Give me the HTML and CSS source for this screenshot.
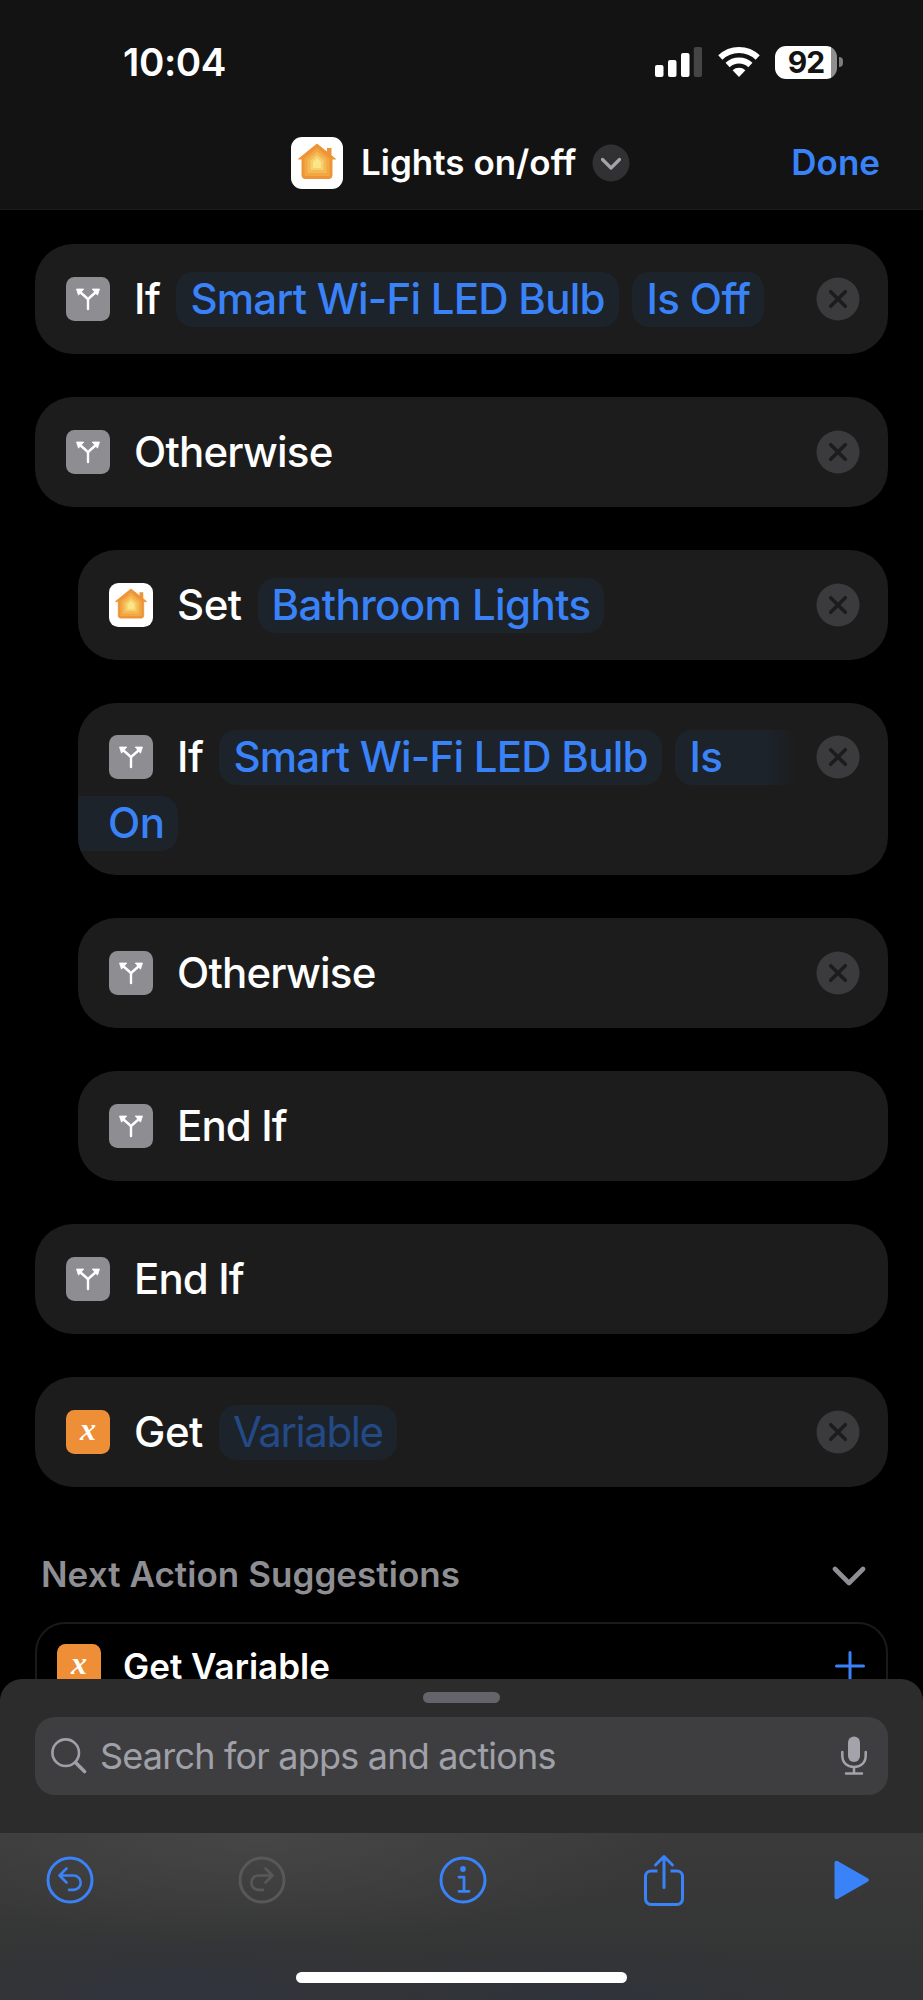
FILE: index.html
```
<!DOCTYPE html>
<html lang="en">

<head>
    <meta charset="UTF-8">
    <meta name="viewport" content="width=device-width, initial-scale=1.0">
    <title>Lights on/off</title>
    <link rel="stylesheet" href="styles.css">
</head>

<body>
    <!-- Shared icons -->
    <svg class="sprite" width="0" height="0">
        <symbol id="home" viewBox="0 0 52 52">
            <rect width="52" height="52" rx="11" fill="#fff" />
            <path d="M36 18v-7h4.500v11z" fill="#ee9438" />
            <path d="M26 7 44.500 22H41V38.500a3 3 0 0 1-3 3H14a3 3 0 0 1-3-3V22H7.500z" fill="#ee9438" stroke="#ee9438" stroke-width="1" stroke-linejoin="round" />
            <path d="M26 11 38.500 21.500V39h-25V21.500z" fill="#f2a742" />
            <path d="M26 14.500 35.500 22.500V36h-19V22.500z" fill="#f4b957" />
            <path d="M26 18 32.500 23.500V33h-13v-9.500z" fill="#f7cf6b" />
            <path d="M26 21 30 25v6h-8v-6z" fill="#fae588" />
        </symbol>
        <symbol id="branch" viewBox="0 0 44 44">
            <rect width="44" height="44" rx="8.500" fill="#8e8d92" />
            <path d="M22 32v-8.500c0-1-.4-1.700-1.200-2.500L14 15M22 23.500c0-1 .4-1.700 1.200-2.500L30 15" fill="none" stroke="#fff" stroke-width="2.400" stroke-linecap="round" />
            <path d="M10.500 12h7.300l-5.300 6.200zM33.500 12h-7.300l5.300 6.200z" fill="#fff" stroke="#fff" stroke-width=".8" stroke-linejoin="round" />
        </symbol>
        <symbol id="close" viewBox="0 0 44 44">
            <circle cx="22" cy="22" r="21.500" fill="#3b3b3d" />
            <path d="M14.700 14.700l14.600 14.600M29.300 14.700L14.700 29.300" stroke="#1c1c1c" stroke-width="3.600" stroke-linecap="round" />
        </symbol>
    </svg>

    <header class="header">
        <div class="status-bar">
            <span class="time">10:04</span>
            <div class="status-icons">
                <svg width="48" height="32" viewBox="0 0 48 32">
                    <g fill="#fff">
                        <rect x="0" y="19" width="8.500" height="12" rx="2" />
                        <rect x="13" y="14" width="8.500" height="17" rx="2" />
                        <rect x="26" y="7" width="8.500" height="24" rx="2" />
                    </g>
                    <rect x="38.800" y="1" width="8.200" height="30" rx="2" fill="#454545" />
                </svg>
                <svg class="wifi" width="42" height="32" viewBox="0 0 42 32">
                    <g fill="none" stroke="#fff" stroke-width="6">
                        <path d="M2.300 11.500a27 27 0 0 1 37.400 0" />
                        <path d="M9.600 19a16.500 16.500 0 0 1 22.800 0" />
                    </g>
                    <path d="M14.600 24.300a9.500 9.500 0 0 1 12.800 0L21 31z" fill="#fff" />
                </svg>
                <div class="battery"><span>92</span></div>
                <i class="battery-tip"></i>
            </div>
        </div>
        <div class="title-bar">
            <svg width="52" height="52"><use href="#home" /></svg>
            <h1>Lights on/off</h1>
            <svg class="title-more" width="38" height="38" viewBox="0 0 38 38">
                <circle cx="19" cy="19" r="18.500" fill="#313134" />
                <path d="M10.500 15.500 19 24l8.500-8.500" fill="none" stroke="#a3a3a9" stroke-width="3.200" stroke-linecap="round" stroke-linejoin="round" />
            </svg>
            <a class="done">Done</a>
        </div>
    </header>

    <main class="actions">
        <div class="card">
            <svg class="icon"><use href="#branch" /></svg>
            <span class="label">If</span>
            <span class="token bulb">Smart Wi-Fi LED Bulb</span>
            <span class="token state">Is Off</span>
            <svg class="close"><use href="#close" /></svg>
        </div>
        <div class="card">
            <svg class="icon"><use href="#branch" /></svg>
            <span class="label otherwise">Otherwise</span>
            <svg class="close"><use href="#close" /></svg>
        </div>

        <div class="nested">
            <div class="card">
                <svg class="icon"><use href="#home" /></svg>
                <span class="label">Set</span>
                <span class="token room">Bathroom Lights</span>
                <svg class="close"><use href="#close" /></svg>
            </div>
            <div class="card card-tall">
                <div class="line">
                    <svg class="icon"><use href="#branch" /></svg>
                    <span class="label">If</span>
                    <span class="token bulb">Smart Wi-Fi LED Bulb</span>
                    <span class="token token-start">Is</span>
                    <svg class="close"><use href="#close" /></svg>
                </div>
                <div class="line">
                    <span class="token token-end">On</span>
                </div>
            </div>
            <div class="card">
                <svg class="icon"><use href="#branch" /></svg>
                <span class="label otherwise">Otherwise</span>
                <svg class="close"><use href="#close" /></svg>
            </div>
            <div class="card">
                <svg class="icon"><use href="#branch" /></svg>
                <span class="label end-if">End If</span>
            </div>
        </div>

        <div class="card">
            <svg class="icon"><use href="#branch" /></svg>
            <span class="label end-if">End If</span>
        </div>
        <div class="card">
            <span class="icon var-icon">x</span>
            <span class="label">Get</span>
            <span class="token token-empty">Variable</span>
            <svg class="close"><use href="#close" /></svg>
        </div>

        <div class="suggestions-head">
            <h2>Next Action Suggestions</h2>
            <svg width="34" height="20" viewBox="0 0 34 20">
                <path d="M3 3l14 14L31 3" fill="none" stroke="#8e8e93" stroke-width="4.600" stroke-linecap="round" stroke-linejoin="round" />
            </svg>
        </div>
        <div class="suggestion">
            <span class="icon var-icon">x</span>
            <span class="suggestion-name">Get Variable</span>
            <svg width="30" height="30" viewBox="0 0 30 30">
                <path d="M15 1.500v27M1.500 15h27" stroke="#3a82f7" stroke-width="3" stroke-linecap="round" />
            </svg>
        </div>
    </main>

    <!-- Bottom sheet lies over the action list -->
    <footer class="sheet">
        <div class="grabber"></div>
        <div class="search">
            <svg width="36" height="36" viewBox="0 0 36 36" fill="none" stroke="#a0a0a8" stroke-linecap="round">
                <circle cx="14.700" cy="14.700" r="13.300" stroke-width="2.600" />
                <path d="M24.500 24.500l9 9" stroke-width="3.600" />
            </svg>
            <span class="placeholder">Search for apps and actions</span>
            <svg width="26" height="40" viewBox="0 0 26 40">
                <rect x="7" y="0.500" width="12" height="25.500" rx="6" fill="#a4a3ab" />
                <path d="M1.300 16v3.500c0 7 4.700 11.500 11.700 11.500s11.700-4.500 11.700-11.500V16M13 31v6.500M5 37.500h16" fill="none" stroke="#a4a3ab" stroke-width="2.500" stroke-linecap="round" />
            </svg>
        </div>
        <nav class="toolbar">
            <svg width="48" height="48" viewBox="0 0 48 48" fill="none" stroke="#3a82f7" stroke-width="2.600" stroke-linecap="round" stroke-linejoin="round">
                <circle cx="24" cy="24" r="22" stroke-width="3" />
                <path d="M20.500 12.500 13.500 19.500l7 7M14 19.500h13.500a7.200 7.200 0 0 1 0 14.400h-4.500" />
            </svg>
            <svg width="48" height="48" viewBox="0 0 48 48" fill="none" stroke="#58585a" stroke-width="2.600" stroke-linecap="round" stroke-linejoin="round">
                <circle cx="24" cy="24" r="22" stroke-width="3" />
                <path d="M27.500 12.500l7 7-7 7M34 19.500H20.500a7.200 7.200 0 0 0 0 14.400H25" />
            </svg>
            <svg width="48" height="48" viewBox="0 0 48 48" fill="none" stroke="#3a82f7" stroke-width="2.800" stroke-linecap="round">
                <circle cx="24" cy="24" r="22" stroke-width="3" />
                <circle cx="24" cy="13" r="2.900" fill="#3a82f7" stroke="none" />
                <path d="M20 21.200h5v14M20 35.300h10" stroke-linejoin="round" />
            </svg>
            <svg width="42" height="54" viewBox="0 0 42 54" fill="none" stroke="#3a82f7" stroke-width="3" stroke-linejoin="round">
                <path d="M14.500 18H8a5.500 5.500 0 0 0-5.500 5.500V46A5.500 5.500 0 0 0 8 51.500h26a5.500 5.500 0 0 0 5.500-5.500V23.500A5.500 5.500 0 0 0 34 18h-6.500" />
                <path d="M21 34.500V4M12.500 12 21 3.500l8.500 8.500" stroke-linecap="round" />
            </svg>
            <svg width="36" height="40" viewBox="0 0 36 40">
                <path d="M2.500 2.800v34.400L32.800 20z" fill="#3a82f7" stroke="#3a82f7" stroke-width="4" stroke-linejoin="round" />
            </svg>
        </nav>
        <div class="home-indicator"></div>
    </footer>
</body>

</html>
```
FILE: styles.css
```
* {
    box-sizing: border-box;
}

body {
    margin: 0;
    position: relative;
    width: 923px;
    height: 2000px;
    overflow: hidden;
    background: #000;
    color: #fff;
    font-family: Inter, "Liberation Sans", sans-serif;
}

h1,
h2 {
    margin: 0;
}

svg {
    display: block;
    flex: none;
}

.sprite {
    position: absolute;
}

/* Header */
.header {
    height: 210px;
    background: #131313;
    border-bottom: 1px solid #1b1b1b;
}

.status-bar {
    display: flex;
    justify-content: space-between;
    align-items: center;
    height: 124px;
    padding: 0 80px 0 123px;
}

.time {
    font-size: 38.500px;
    font-weight: 600;
    letter-spacing: -0.4px;
}

.status-icons {
    display: flex;
    align-items: center;
}

.wifi {
    margin: 0 15px;
}

.battery {
    width: 62px;
    height: 33px;
    border-radius: 11px;
    background: linear-gradient(to right, #fff 56px, #8f8f8f 56px);
    color: #131313;
    font-size: 30px;
    font-weight: 700;
    line-height: 33px;
    text-align: center;
    letter-spacing: -1px;
}

.battery-tip {
    width: 4px;
    height: 10px;
    margin-left: 2px;
    border-radius: 0 4px 4px 0;
    background: #7d7d7d;
}

.title-bar {
    display: flex;
    align-items: center;
    height: 78px;
    padding: 0 43px 0 291px;
}

.title-bar h1 {
    width: 213px;
    margin-left: 18px;
    padding-bottom: 2px;
    font-size: 35px;
    font-weight: 600;
    white-space: nowrap;
}

.title-more {
    margin-left: 18px;
}

.done {
    margin-left: auto;
    padding-bottom: 2px;
    color: #3a82f7;
    font-size: 35px;
    font-weight: 600;
}

/* Action cards */
.actions {
    padding: 34px 35px 0;
}

.card {
    display: flex;
    align-items: center;
    height: 110px;
    margin-bottom: 43px;
    padding: 0 28px 0 31px;
    border-radius: 38px;
    background: #1c1c1c;
    font-size: 42px;
    font-weight: 450;
    white-space: nowrap;
    overflow: hidden;
}

.nested {
    padding-left: 43px;
}

.icon {
    flex: none;
    width: 44px;
    height: 44px;
}

.label {
    margin-left: 24px;
    padding-bottom: 1px;
    letter-spacing: -0.5px;
}

.otherwise {
    letter-spacing: -0.8px;
}

.end-if {
    letter-spacing: -0.9px;
}

.token {
    height: 55px;
    margin-left: 13px;
    padding: 0 14px;
    border-radius: 17px;
    background: #1c232b;
    color: #3a82f7;
    line-height: 54px;
    letter-spacing: -0.5px;
}

.label + .token {
    margin-left: 16px;
}

.bulb {
    width: 443px;
    letter-spacing: -0.75px;
}

.state {
    width: 132px;
    letter-spacing: -0.6px;
}

.room {
    width: 346px;
    letter-spacing: -0.6px;
}

.close {
    width: 44px;
    height: 44px;
    margin-left: auto;
}

.card-tall {
    display: block;
    height: 172px;
    padding: 21px 0 0;
}

.line {
    display: flex;
    align-items: center;
    height: 66px;
    padding: 0 28px 0 31px;
}

.line + .line {
    padding-left: 0;
}

/* A token broken over two lines: fades out, then picks up at the card edge */
.token-start {
    width: 121px;
    border-radius: 17px 0 0 17px;
    background: linear-gradient(to right, #1c232b 75%, #1c1c1c);
}

.token-end {
    width: 100px;
    margin-left: 0;
    padding-left: 30px;
    border-radius: 0 17px 17px 0;
}

.token-empty {
    width: 178px;
    color: #234a86;
    font-weight: 400;
    letter-spacing: -1.4px;
}

.var-icon {
    border-radius: 8.500px;
    background: #ee8f37;
    font: italic bold 32px/39px "Liberation Serif", serif;
    text-align: center;
}

/* Suggestions */
.suggestions-head {
    display: flex;
    justify-content: space-between;
    align-items: center;
    height: 92px;
    padding: 0 22px 0 6px;
}

.suggestions-head h2 {
    padding-bottom: 4px;
    color: #8e8e93;
    font-size: 35px;
    font-weight: 600;
    letter-spacing: 0.05px;
}

.suggestion {
    display: flex;
    align-items: center;
    height: 130px;
    padding: 0 21px 42px 20px;
    border: 2px solid #1a1a1b;
    border-radius: 30px;
}

.suggestion-name {
    flex: 1;
    margin-left: 22px;
    font-size: 35px;
    font-weight: 600;
}

/* Bottom sheet */
.sheet {
    position: absolute;
    z-index: 1;
    left: 0;
    right: 0;
    bottom: 0;
    height: 321px;
    padding-top: 13px;
    border-radius: 22px 22px 0 0;
    background: #2c2c2c;
}

/* Blurred content behind the toolbar */
.sheet::before {
    content: "";
    position: absolute;
    z-index: -1;
    inset: 154px 0 0;
    background:
        radial-gradient(ellipse 260px 70px at 20% 100%, #30343e, transparent),
        radial-gradient(ellipse 260px 60px at 62% 100%, #2f333b, transparent),
        radial-gradient(ellipse 420px 110px at 28% 0, #464647, transparent),
        linear-gradient(#3a3a3a, #323334);
}

.grabber {
    width: 77px;
    height: 11px;
    margin: 0 auto 14px;
    border-radius: 6px;
    background: #65646a;
}

.search {
    display: flex;
    align-items: center;
    height: 78px;
    margin: 0 35px 38px;
    padding: 0 21px 0 16px;
    border-radius: 20px;
    background: #3e3e40;
}

.placeholder {
    flex: 1;
    margin-left: 13px;
    color: #a0a0a8;
    font-size: 36px;
    letter-spacing: -0.8px;
}

.toolbar {
    display: grid;
    grid-template-columns: 192px 201px 204px 191px auto;
    align-items: center;
    height: 94px;
    padding-left: 46px;
}

.home-indicator {
    width: 331px;
    height: 11px;
    margin: 45px auto 0;
    border-radius: 6px;
    background: #fff;
}
```
